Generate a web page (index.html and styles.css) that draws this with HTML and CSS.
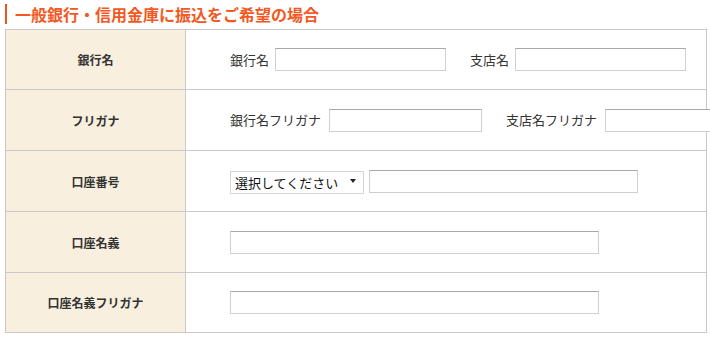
FILE: index.html
```html
<!DOCTYPE html>
<html lang="ja">
<head>
<meta charset="utf-8">
<link rel="stylesheet" href="styles.css">
</head>
<body>
<h2 class="title">一般銀行・信用金庫に振込をご希望の場合</h2>
<table class="form">
  <tr>
    <th>銀行名</th>
    <td>
      <div class="fields">
        <label class="lbl">銀行名</label><input class="in w171" type="text">
        <label class="lbl second">支店名</label><input class="in w171" type="text">
      </div>
    </td>
  </tr>
  <tr class="mid">
    <th>フリガナ</th>
    <td>
      <div class="fields kana">
        <label class="lbl">銀行名フリガナ</label><input class="in w153" type="text">
        <label class="lbl second">支店名フリガナ</label><input class="in w153" type="text">
      </div>
    </td>
  </tr>
  <tr class="mid">
    <th>口座番号</th>
    <td>
      <div class="fields">
        <span class="sel"><select><option>選択してください</option></select></span><input class="in w269 after-sel" type="text">
      </div>
    </td>
  </tr>
  <tr class="mid">
    <th>口座名義</th>
    <td><div class="fields"><input class="in w369" type="text"></div></td>
  </tr>
  <tr>
    <th>口座名義フリガナ</th>
    <td><div class="fields"><input class="in w369" type="text"></div></td>
  </tr>
</table>
</body>
</html>
```
FILE: styles.css
```css
html, body {
  margin: 0;
  padding: 0;
  background: #fff;
  font-family: "Noto Sans CJK JP", "Noto Sans", sans-serif;
  color: #333;
  overflow: hidden;
}
.title {
  margin: 4px 0 0 5px;
  padding-left: 8px;
  border-left: 2px solid #f2541b;
  height: 20px;
  line-height: 20px;
  font-size: 16px;
  font-weight: bold;
  color: #f2581f;
  letter-spacing: 0;
}
.form {
  margin: 5px 0 0 5px;
  width: 702px;
  border-collapse: collapse;
  border: 1px solid #c9c9c9;
  table-layout: fixed;
}
.form th,
.form td {
  border: 1px solid #c9c9c9;
  height: 60px;
  padding: 0;
  box-sizing: border-box;
}
.form tr.mid th,
.form tr.mid td {
  height: 61px;
}
.form th {
  width: 180px;
  background: #f8efde;
  font-size: 12px;
  font-weight: bold;
  color: #333;
  text-align: center;
}
.form td {
  padding-left: 44px;
  background: #fff;
  overflow: visible;
  white-space: nowrap;
}
.fields {
  display: flex;
  align-items: center;
}
.lbl {
  font-size: 13px;
  color: #333;
  margin-right: 6px;
  line-height: 22px;
}
.kana .lbl {
  margin-right: 8px;
}
.lbl.second {
  margin-left: 24px;
}
.in {
  box-sizing: border-box;
  height: 23px;
  border: 1px solid #d0d0d0;
  border-top-color: #a9a9a9;
  background: #fff;
  padding: 0 4px;
  margin: 0;
  flex: none;
}
.w171 { width: 171px; }
.w153 { width: 153px; }
.w269 { width: 269px; }
.w369 { width: 369px; }
.after-sel { margin-left: 5px; }
.sel {
  position: relative;
  display: inline-block;
  flex: none;
}
.sel select {
  appearance: none;
  -webkit-appearance: none;
  box-sizing: border-box;
  width: 134px;
  height: 23px;
  border: 1px solid #d4d4d4;
  background: #fff;
  font-family: "Noto Sans CJK JP", sans-serif;
  font-size: 13px;
  color: #111;
  padding: 0 0 0 4px;
  margin: 0;
  border-radius: 0;
}
.sel::after {
  content: "";
  position: absolute;
  right: 8px;
  top: 10px;
  border-left: 3.5px solid transparent;
  border-right: 3.5px solid transparent;
  border-top: 4px solid #222;
  pointer-events: none;
}
```
